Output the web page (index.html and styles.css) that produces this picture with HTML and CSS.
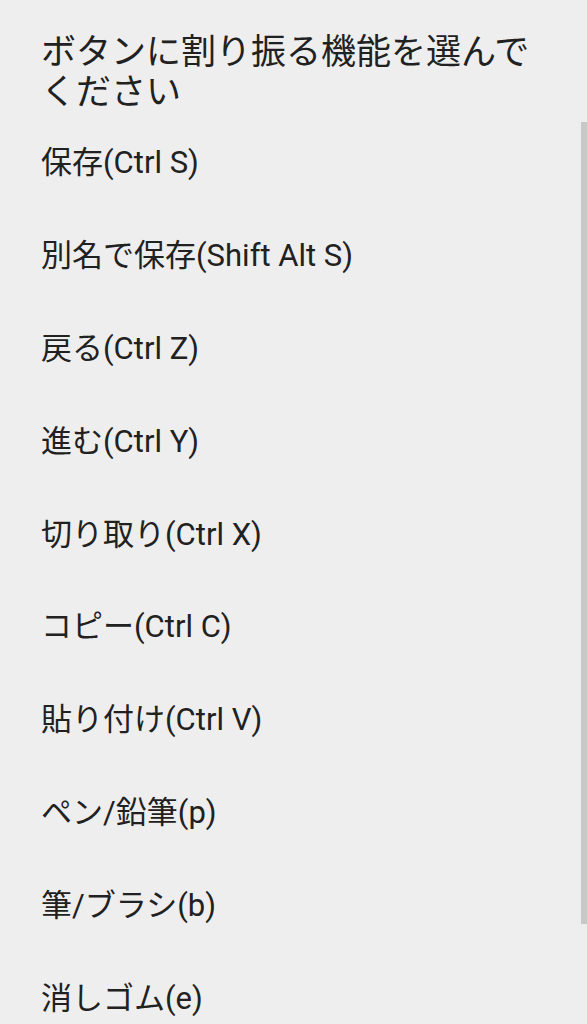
FILE: index.html
```html
<!DOCTYPE html>
<html lang="ja">
<head>
<meta charset="utf-8">
<title>機能の選択</title>
<link rel="stylesheet" href="styles.css">
</head>
<body>
<div class="dialog">
  <h1 class="title">ボタンに割り振る機能を選んでください</h1>
  <ul class="list">
    <li class="item">保存(Ctrl S)</li>
    <li class="item">別名で保存(Shift Alt S)</li>
    <li class="item">戻る(Ctrl Z)</li>
    <li class="item">進む(Ctrl Y)</li>
    <li class="item">切り取り(Ctrl X)</li>
    <li class="item">コピー(Ctrl C)</li>
    <li class="item">貼り付け(Ctrl V)</li>
    <li class="item">ペン/鉛筆(p)</li>
    <li class="item">筆/ブラシ(b)</li>
    <li class="item">消しゴム(e)</li>
  </ul>
  <div class="scrollbar"></div>
</div>
</body>
</html>
```
FILE: styles.css
```css
html, body {
  margin: 0;
  padding: 0;
  background: #eeeeee;
}
body {
  font-family: Roboto, "Noto Sans CJK JP", sans-serif;
  color: #212121;
  overflow: hidden;
  height: 1024px;
}
.dialog {
  position: relative;
  height: 1024px;
}
.title {
  margin: 0;
  padding: 33px 30px 0 41px;
  font-size: 35px;
  line-height: 40px;
  font-weight: 400;
  color: #212121;
}
.list {
  list-style: none;
  margin: 0;
  padding: 0;
  margin-top: 4px;
}
.item {
  height: 92.8px;
  display: flex;
  align-items: center;
  padding-left: 41px;
  font-size: 31px;
  line-height: 40px;
  color: #212121;
}
.scrollbar {
  position: absolute;
  right: 0;
  top: 122px;
  width: 6px;
  height: 802px;
  background: #c8c8c8;
}
```
